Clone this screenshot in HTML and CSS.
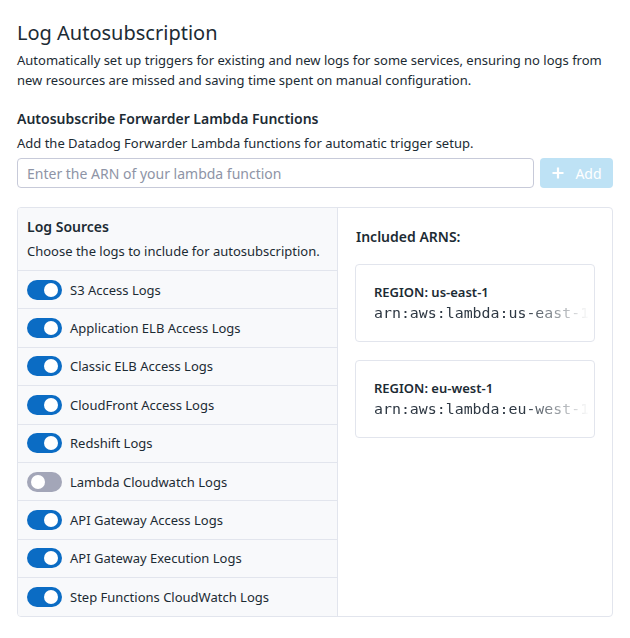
FILE: index.html
```html
<!DOCTYPE html>
<html>
<head>
<meta charset="utf-8">
<link rel="stylesheet" href="styles.css">
</head>
<body>
<div class="page">
  <h1 class="title">Log Autosubscription</h1>
  <p class="desc">Automatically set up triggers for existing and new logs for some services, ensuring no logs from new resources are missed and saving time spent on manual configuration.</p>
  <h2 class="section-title">Autosubscribe Forwarder Lambda Functions</h2>
  <p class="sub">Add the Datadog Forwarder Lambda functions for automatic trigger setup.</p>
  <div class="add-row">
    <input class="arn-input" type="text" placeholder="Enter the ARN of your lambda function">
    <button class="add-btn"><svg class="plus" width="12" height="12" viewBox="0 0 12 12"><path d="M6 0.5v11M0.5 6h11" stroke="#fff" stroke-width="2.2"/></svg><span>Add</span></button>
  </div>
  <div class="panel">
    <div class="sources">
      <div class="sources-head">
        <div class="sources-title">Log Sources</div>
        <div class="sources-sub">Choose the logs to include for autosubscription.</div>
      </div>
      <div class="row"><span class="toggle on"></span><span>S3 Access Logs</span></div>
      <div class="row"><span class="toggle on"></span><span>Application ELB Access Logs</span></div>
      <div class="row"><span class="toggle on"></span><span>Classic ELB Access Logs</span></div>
      <div class="row"><span class="toggle on"></span><span>CloudFront Access Logs</span></div>
      <div class="row"><span class="toggle on"></span><span>Redshift Logs</span></div>
      <div class="row"><span class="toggle off"></span><span>Lambda Cloudwatch Logs</span></div>
      <div class="row"><span class="toggle on"></span><span>API Gateway Access Logs</span></div>
      <div class="row"><span class="toggle on"></span><span>API Gateway Execution Logs</span></div>
      <div class="row"><span class="toggle on"></span><span>Step Functions CloudWatch Logs</span></div>
    </div>
    <div class="arns">
      <div class="arns-title">Included ARNS:</div>
      <div class="card">
        <div class="region">REGION: us-east-1</div>
        <div class="arn">arn:aws:lambda:us-east-1</div>
      </div>
      <div class="card">
        <div class="region">REGION: eu-west-1</div>
        <div class="arn">arn:aws:lambda:eu-west-1</div>
      </div>
    </div>
  </div>
</div>
</body>
</html>
```

FILE: styles.css
```css
* { box-sizing: border-box; }
html, body { margin: 0; padding: 0; background: #fff; }
body {
  font-family: "Noto Sans", "Open Sans", sans-serif;
  color: #1c2b34;
}
.page {
  padding: 19px 17px 0 17px;
}
.title {
  margin: 0;
  font-size: 20px;
  line-height: 28px;
  font-weight: 400;
}
.desc {
  margin: 3px 0 0 0;
  font-size: 13px;
  line-height: 20px;
}
.section-title {
  margin: 19px 0 0 0;
  font-size: 14px;
  line-height: 20px;
  font-weight: 600;
}
.sub {
  margin: 4px 0 0 0;
  font-size: 13px;
  line-height: 20px;
}
.add-row {
  display: flex;
  gap: 6px;
  margin-top: 5px;
  height: 30px;
}
.arn-input {
  flex: 1;
  height: 30px;
  border: 1px solid #c7cad9;
  border-radius: 4px;
  padding: 0 9px;
  font-family: "Noto Sans", sans-serif;
  font-size: 14px;
  color: #1c2b34;
  outline: none;
}
.arn-input::placeholder { color: #8e94a6; }
.add-btn {
  width: 73px;
  height: 30px;
  border: none;
  border-radius: 4px;
  background: #bee2f5;
  color: #fff;
  font-family: "Noto Sans", sans-serif;
  font-size: 14px;
  display: flex;
  align-items: center;
  justify-content: center;
  gap: 11px;
  padding: 0 0 0 1px;
}
.panel {
  margin-top: 19px;
  display: flex;
  border: 1px solid #e2e5ed;
  border-radius: 4px;
  height: 410px;
  overflow: hidden;
}
.sources {
  width: 320px;
  flex-shrink: 0;
  background: #f8f9fb;
  border-right: 1px solid #e2e5ed;
  display: flex;
  flex-direction: column;
}
.sources-head {
  padding: 9px 9px 9px 9px;
}
.sources-title {
  font-size: 14px;
  line-height: 20px;
  font-weight: 600;
}
.sources-sub {
  margin-top: 4px;
  font-size: 13px;
  line-height: 20px;
}
.row {
  height: 38.4px;
  border-top: 1px solid #e2e5ed;
  display: flex;
  align-items: center;
  padding-left: 9px;
  gap: 8px;
  font-size: 13px;
}
.toggle {
  position: relative;
  width: 35px;
  height: 20px;
  border-radius: 10px;
  background: #0b6cc4;
  flex-shrink: 0;
}
.toggle::after {
  content: "";
  position: absolute;
  top: 3px;
  width: 14px;
  height: 14px;
  border-radius: 50%;
  background: #fff;
}
.toggle.on::after { right: 4px; }
.toggle.off { background: #a3a6b8; }
.toggle.off::after { left: 4px; }
.arns {
  flex: 1;
  min-width: 0;
  padding: 19px 17px 0 17px;
}
.arns-title {
  font-size: 14px;
  line-height: 20px;
  font-weight: 600;
  padding-left: 1px;
}
.card {
  margin-top: 17px;
  border: 1px solid #e2e5ed;
  border-radius: 4px;
  padding: 17px 18px 17px 18px;
  height: 78px;
}
.card + .card { margin-top: 18px; }
.region {
  font-size: 13px;
  line-height: 20px;
  font-weight: 600;
}
.arn {
  margin-top: 1px;
  font-family: "DejaVu Sans Mono", monospace;
  font-size: 14.9px;
  line-height: 20px;
  color: #2e3843;
  white-space: nowrap;
  width: 220px;
  -webkit-mask-image: linear-gradient(to right, #000 0, #000 150px, rgba(0,0,0,0.15) 205px, transparent 215px);
  mask-image: linear-gradient(to right, #000 0, #000 150px, rgba(0,0,0,0.15) 205px, transparent 215px);
}
```
